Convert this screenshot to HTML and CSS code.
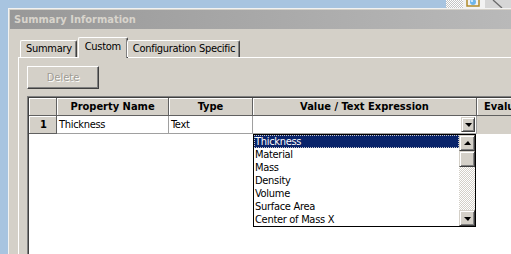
FILE: index.html
```html
<!DOCTYPE html>
<html lang="en">
<head>
    <meta charset="UTF-8">
    <title>Summary Information</title>
    <link rel="stylesheet" href="styles.css">
</head>
<body>

    <div class="tray">
        <span class="checker"></span>
        <span class="tray-icon">
            <svg width="20" height="8" viewBox="0 0 20 8">
                <rect x="2" y="0" width="16" height="8" fill="#f2f2f2"/>
                <path d="M4 0 V6 H16 V0" fill="none" stroke="#b08a2a" stroke-width="1.5"/>
                <circle cx="10" cy="2" r="3" fill="#6fb6ea"/>
                <circle cx="9" cy="1" r="1" fill="#e6f4ff"/>
            </svg>
        </span>
        <span class="corner">
            <svg width="26" height="8" viewBox="0 0 26 8">
                <path d="M8 0 L17 8" stroke="#6a6a6a" stroke-width="1.3"/>
            </svg>
        </span>
    </div>

    <div class="window">
        <div class="titlebar">Summary Information</div>
        <div class="dialog">
            <div class="tabs">
                <div class="tab">Summary</div>
                <div class="tab active">Custom</div>
                <div class="tab">Configuration Specific</div>
            </div>
            <div class="panel">
                <button class="btn" disabled>Delete</button>
                <div class="grid-frame">
                    <div class="grid">
                        <div class="hd"></div>
                        <div class="hd">Property Name</div>
                        <div class="hd">Type</div>
                        <div class="hd">Value / Text Expression</div>
                        <div class="hd">Evaluated Value</div>

                        <div class="hd row-num">1</div>
                        <div class="cell">Thickness</div>
                        <div class="cell">Text</div>
                        <div class="cell combo">
                            <span class="combo-btn"><span class="arrow-down"></span></span>
                            <div class="dropdown">
                                <ul class="options">
                                    <li class="selected">Thickness</li>
                                    <li>Material</li>
                                    <li>Mass</li>
                                    <li>Density</li>
                                    <li>Volume</li>
                                    <li>Surface Area</li>
                                    <li>Center of Mass X</li>
                                </ul>
                                <div class="scrollbar">
                                    <span class="sb-btn"><span class="arrow-up"></span></span>
                                    <span class="sb-thumb"></span>
                                    <span class="sb-track"></span>
                                    <span class="sb-btn"><span class="arrow-down"></span></span>
                                </div>
                            </div>
                        </div>
                        <div class="cell readonly"></div>
                    </div>
                </div>
            </div>
        </div>
    </div>

</body>
</html>
```

FILE: styles.css
```css
* {
    margin: 0;
    padding: 0;
    box-sizing: border-box;
}

html, body {
    height: 100%;
    overflow: hidden;
}

body {
    font-family: 'DejaVu Sans Condensed', 'DejaVu Sans', sans-serif;
    font-size: 11px;
    letter-spacing: -0.3px;
    color: #000;
    background: #a8c4e0;
    display: flex;
    flex-direction: column;
}

/* desktop strip above the window */
.tray {
    height: 8px;
    flex-shrink: 0;
    display: flex;
    justify-content: flex-end;
}

.checker {
    width: 17px;
    background: repeating-conic-gradient(#c4c4c4 0 25%, #fff 0 50%) 0 0 / 2px 2px;
}

.tray-icon {
    width: 22px;
    display: flex;
    background: #f2f2f2;
}

.corner {
    width: 26px;
    background: #d6d6d6;
    display: flex;
}

.window {
    flex: 1;
    min-height: 0;
    margin-left: 8px;
    border-top: 1px solid #f2f2f2;
    border-left: 1px solid #f2f2f2;
    padding: 1px 0 0 1px;
    background: #d4d0c8;
    display: flex;
    flex-direction: column;
    overflow: hidden;
}

.titlebar {
    height: 19px;
    flex-shrink: 0;
    line-height: 19px;
    padding-left: 4px;
    font-weight: bold;
    letter-spacing: 0;
    color: #d8d4cc;
    background: linear-gradient(to right, #989898, #b9b9b9);
}

.dialog {
    flex: 1;
    min-height: 0;
    padding: 8px 0 0 8px;
    display: flex;
    flex-direction: column;
}

/* tabs */
.tabs {
    display: flex;
    align-items: flex-end;
    height: 20px;
    flex-shrink: 0;
    padding-left: 2px;
    position: relative;
    z-index: 1;
}

.tab {
    height: 17px;
    line-height: 16px;
    padding: 0 4px 0 5px;
    border-top: 1px solid #fff;
    border-left: 1px solid #fff;
    border-right: 1px solid #404040;
    box-shadow: inset -1px 0 0 #808080;
    border-radius: 2px 2px 0 0;
}

.tab.active {
    height: 21px;
    margin: 0 -1px -1px 1px;
    padding: 0 6px 0 6px;
    line-height: 18px;
    background: #d4d0c8;
}

.panel {
    flex: 1;
    min-height: 0;
    border-top: 1px solid #fff;
    border-left: 1px solid #fff;
    padding: 8px 0 0 8px;
    display: flex;
    flex-direction: column;
}

.btn {
    display: block;
    flex-shrink: 0;
    width: 72px;
    height: 23px;
    font-family: inherit;
    font-size: 11px;
    letter-spacing: 0;
    color: #a09c94;
    text-shadow: 1px 1px 0 #fff;
    background: #d4d0c8;
    border: 1px solid;
    border-color: #fff #404040 #404040 #fff;
    box-shadow: inset -1px -1px 0 #808080;
    margin-bottom: 7px;
}

/* grid */
.grid-frame {
    flex: 1;
    min-height: 0;
    border-top: 1px solid #808080;
    border-left: 1px solid #808080;
    overflow: hidden;
}

.grid {
    border-top: 1px solid #404040;
    border-left: 1px solid #404040;
    background: #fff;
    height: 100%;
    display: grid;
    grid-template-columns: 28px 112px 84px 224px 105px;
    grid-auto-rows: 18px;
    align-content: start;
}

.hd {
    background: #d4d0c8;
    border-right: 1px solid #606060;
    border-bottom: 1px solid #606060;
    box-shadow: inset 1px 1px 0 #fff;
    font-weight: bold;
    letter-spacing: 0;
    text-align: center;
    line-height: 17px;
    white-space: nowrap;
    overflow: hidden;
}

.row-num {
    padding-left: 2px;
}

.cell {
    border-right: 1px solid #a0a0a0;
    border-bottom: 1px solid #a0a0a0;
    line-height: 17px;
    padding-left: 2px;
    white-space: nowrap;
}

.cell.readonly {
    background: #d4d0c8;
    border-bottom-color: #d4d0c8;
}

.combo {
    position: relative;
    display: flex;
    justify-content: flex-end;
    align-items: flex-start;
    padding: 1px 1px 0 0;
}

.combo-btn, .sb-btn {
    width: 15px;
    height: 15px;
    background: #d4d0c8;
    border: 1px solid;
    border-color: #d4d0c8 #404040 #404040 #d4d0c8;
    box-shadow: inset 1px 1px 0 #fff, inset -1px -1px 0 #808080;
    display: flex;
    align-items: center;
    justify-content: center;
}

.combo-btn {
    width: 14px;
}

.arrow-down, .arrow-up {
    width: 0;
    height: 0;
    border-left: 4px solid transparent;
    border-right: 3px solid transparent;
}

.arrow-down {
    border-top: 4px solid #000;
    margin-top: 1px;
}

.arrow-up {
    border-bottom: 4px solid #000;
}

/* open dropdown list */
.dropdown {
    position: absolute;
    top: 18px;
    left: 0;
    width: 223px;
    height: 93px;
    background: #fff;
    border: 1px solid #000;
    display: flex;
    z-index: 2;
}

.options {
    list-style: none;
    flex: 1;
}

.options li {
    height: 13px;
    line-height: 13px;
    padding-left: 1px;
    white-space: nowrap;
}

.options li.selected {
    background: #0a246a;
    color: #fff;
    outline: 1px dotted #c8c8c8;
    outline-offset: -1px;
}

.scrollbar {
    width: 16px;
    display: flex;
    flex-direction: column;
}

.sb-btn {
    width: 16px;
    height: 16px;
}

.sb-thumb {
    height: 16px;
    background: #d4d0c8;
    border: 1px solid;
    border-color: #d4d0c8 #404040 #404040 #d4d0c8;
    box-shadow: inset 1px 1px 0 #fff, inset -1px -1px 0 #808080;
}

.sb-track {
    flex: 1;
    background: repeating-conic-gradient(#d4d0c8 0 25%, #fff 0 50%) 0 0 / 2px 2px;
}
```
